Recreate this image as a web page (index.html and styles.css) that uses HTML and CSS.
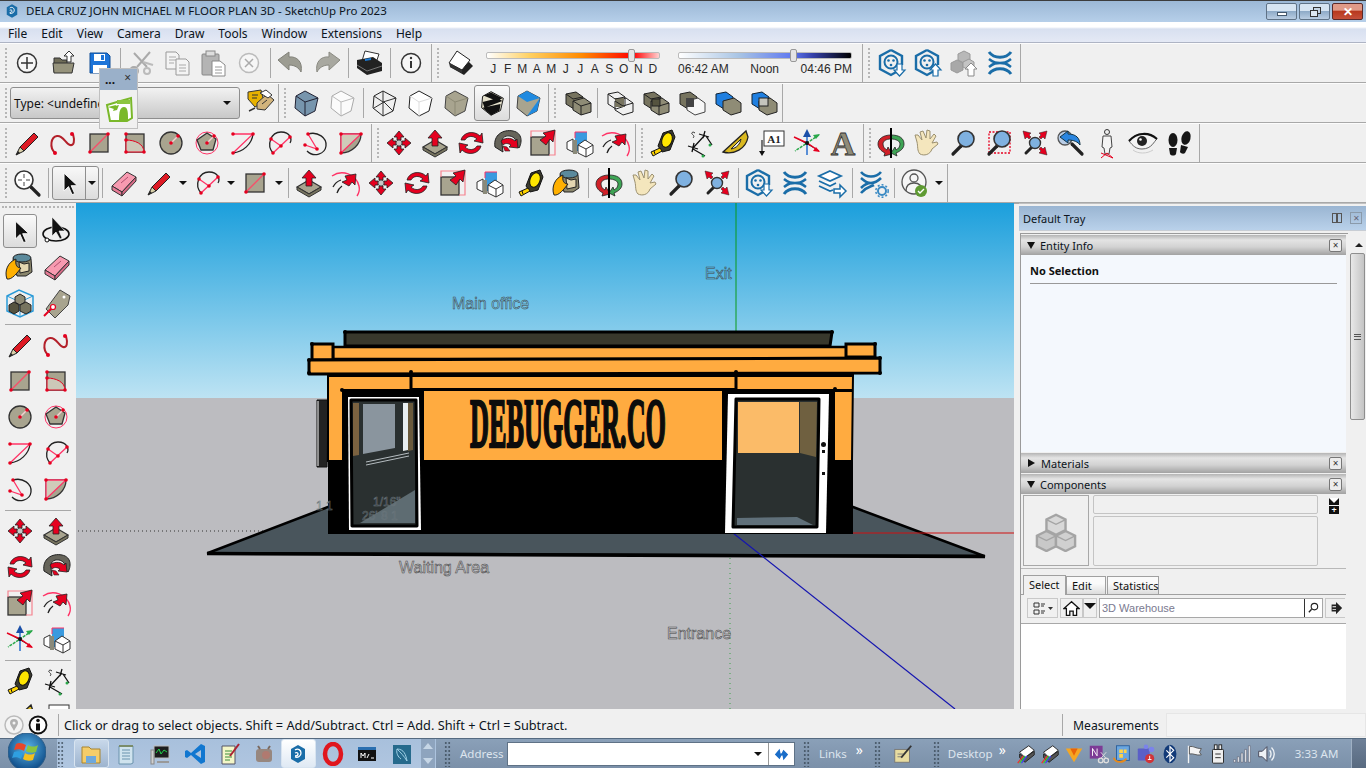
FILE: index.html
```html
<!DOCTYPE html>
<html>
  <head>
    <meta charset="utf-8">
    <title>SketchUp Pro 2023</title>
    <link rel="stylesheet" href="styles.css">
  </head>
  <body>
    <svg class="defs" xmlns="http://www.w3.org/2000/svg">
      <!-- file toolbar -->
      <symbol id="new" viewBox="0 0 36 36"><circle cx="18" cy="18" r="9.5" fill="#f6f6f6" stroke="#333" stroke-width="1.5"/><path d="M18 12v12M12 18h12" stroke="#333" stroke-width="1.5"/></symbol>
      <symbol id="open" viewBox="0 0 36 36"><path d="M9 27V13h6l2 2h5v12z" fill="#6f6c58" stroke="#333"/><path d="M8 18h21l-2 10H9z" fill="#96937c" stroke="#333"/><path d="M24 6l5 5h-3v6h-4v-6h-3z" fill="#fff" stroke="#333"/></symbol>
      <symbol id="save" viewBox="0 0 36 36"><path d="M9 8h17l3 3v17H9z" fill="#1d74d8" stroke="#124f96"/><rect x="13" y="9" width="11" height="7" fill="#fff"/><rect x="20" y="10" width="3" height="5" fill="#1d74d8"/><rect x="12" y="20" width="14" height="8" fill="#fff"/></symbol>
      <symbol id="cut" viewBox="0 0 36 36"><path d="M27 7L14 22M11 8l13 14" stroke="#aaa" stroke-width="2" fill="none"/><path d="M30 20l-10-3" stroke="#bbb" stroke-width="2"/><circle cx="11" cy="26" r="4" fill="none" stroke="#aaa" stroke-width="2"/><circle cx="24" cy="26" r="3" fill="none" stroke="#bbb" stroke-width="2"/></symbol>
      <symbol id="copy" viewBox="0 0 36 36"><path d="M7 7h10l3 3v14H7z" fill="#f4f4f4" stroke="#999"/><path d="M17 14h10l3 3v13H17z" fill="#f4f4f4" stroke="#999"/><path d="M10 12h7M10 15h7M10 18h5M20 20h7M20 23h7M20 26h7" stroke="#aaa"/></symbol>
      <symbol id="paste" viewBox="0 0 36 36"><rect x="7" y="9" width="17" height="21" rx="1" fill="#b4b4b4" stroke="#888"/><rect x="11" y="6" width="9" height="5" fill="#ddd" stroke="#888"/><path d="M17 16h8l5 4v11H17z" fill="#fff" stroke="#888"/><path d="M20 22h7M20 25h7M20 28h7" stroke="#999"/></symbol>
      <symbol id="erase" viewBox="0 0 36 36"><circle cx="18" cy="18" r="9.5" fill="#f6f6f6" stroke="#bbb" stroke-width="1.5"/><path d="M14 14l8 8M22 14l-8 8" stroke="#aaa" stroke-width="1.5"/></symbol>
      <symbol id="undo" viewBox="0 0 36 36"><path d="M5 15l11-8v5c8-1 14 5 12 15-2-4-6-7-12-7v5z" fill="#9c9c92" stroke="#808078"/></symbol>
      <symbol id="redo" viewBox="0 0 36 36"><path d="M31 15l-11-8v5c-8-1-14 5-12 15 2-4 6-7 12-7v5z" fill="#a8a8a0" stroke="#8a8a82"/></symbol>
      <symbol id="print" viewBox="0 0 36 36"><path d="M14 6l14 3-3 9-14-2z" fill="#fff" stroke="#333"/><path d="M6 15l16-3 9 6v8l-15 4-10-7z" fill="#222"/><path d="M6 20l10 6 15-5" stroke="#777" fill="none"/><path d="M14 14l6-1v2l-6 1z" fill="#1c7cd6"/></symbol>
      <symbol id="info" viewBox="0 0 36 36"><circle cx="18" cy="18" r="9.5" fill="#f6f6f6" stroke="#333" stroke-width="1.5"/><path d="M18 16v7" stroke="#333" stroke-width="2"/><circle cx="18" cy="13" r="1.2" fill="#333"/></symbol>
      <!-- shadows, warehouse -->
      <symbol id="shadow" viewBox="0 0 36 36"><path d="M9 22l14 8 9-9-4-4z" fill="#222"/><path d="M16 6l13 9-8 10-13-7z" fill="#fff" stroke="#222"/><path d="M8 18l13 7 0 3-12-6z" fill="#333"/></symbol>
      <symbol id="wh" viewBox="0 0 36 36"><path d="M17 5l11 6v9M24 26l-7 4-11-6V11l11-6" fill="none" stroke="#1a6da8" stroke-width="2.4"/><circle cx="17" cy="17" r="6.5" fill="none" stroke="#1a6da8" stroke-width="2"/><circle cx="14.5" cy="15.5" r="1.3" fill="#1a6da8"/><circle cx="19.5" cy="15.5" r="1.3" fill="#1a6da8"/><circle cx="17" cy="20" r="1.3" fill="#1a6da8"/></symbol>
      <symbol id="whdown" viewBox="0 0 36 36"><use href="#wh"/><path d="M23 19h5v6h3l-5.5 6-5.5-6h3z" fill="#fff" stroke="#1a6da8" stroke-width="1.2"/></symbol>
      <symbol id="whup" viewBox="0 0 36 36"><use href="#wh"/><path d="M23 31h5v-6h3l-5.5-6-5.5 6h3z" fill="#fff" stroke="#1a6da8" stroke-width="1.2"/></symbol>
      <symbol id="cubesup" viewBox="0 0 36 36"><path d="M18 6l6 3v6l-6 3-6-3V9z" fill="#b8b8b8" stroke="#999"/><path d="M11 15l6 3v7l-6 3-6-3v-7z" fill="#a8a8a8" stroke="#999"/><path d="M23 14l5 3v5l-5 3-6-3v-5z" fill="#c4c4c4" stroke="#999"/><path d="M22 31v-7h-3l6-6 6 6h-3v7z" fill="#fff" stroke="#888"/></symbol>
      <symbol id="ext" viewBox="0 0 36 36"><path d="M7 7c5 7 17 7 22 0" fill="none" stroke="#1a6da8" stroke-width="3"/><path d="M7 29c5-7 17-7 22 0" fill="none" stroke="#1a6da8" stroke-width="3"/><path d="M7 14c5 4 7 4 11 4s6 0 11-4M7 22c5-4 7-4 11-4s6 0 11 4" fill="none" stroke="#1a6da8" stroke-width="2.5"/></symbol>
      <symbol id="layers" viewBox="0 0 36 36"><path d="M17 6l11 5-11 5-11-5zM6 16l11 5 6-3M6 21l11 5 3-1" fill="#fff" stroke="#1a6da8" stroke-width="1.8"/><path d="M21 24h6v-4l6 6-6 6v-4h-6z" fill="#fff" stroke="#1a6da8" stroke-width="1.5"/></symbol>
      <symbol id="extgear" viewBox="0 0 36 36"><path d="M6 7c5 6 15 6 20 0M6 28c5-6 9-6 13-8M6 13c5 4 6 5 10 5s6-1 10-5M6 23c4-4 6-5 10-5" fill="none" stroke="#1a6da8" stroke-width="2.6"/><circle cx="27" cy="26" r="4" fill="none" stroke="#3a8ac4" stroke-width="2"/><circle cx="27" cy="26" r="6.2" fill="none" stroke="#3a8ac4" stroke-width="1.5" stroke-dasharray="2 2"/></symbol>
      <symbol id="user" viewBox="0 0 36 36"><circle cx="17" cy="17" r="12" fill="#f6f6f6" stroke="#555" stroke-width="1.3"/><circle cx="17" cy="13" r="4" fill="none" stroke="#555" stroke-width="1.3"/><path d="M9 26c0-7 4-8 8-8s8 1 8 8" fill="none" stroke="#555" stroke-width="1.3"/><circle cx="24" cy="26" r="6" fill="#5e9a32"/><path d="M21 26l2 2 4-4" fill="none" stroke="#fff" stroke-width="1.4"/></symbol>
      <!-- drawing -->
      <symbol id="pencil" viewBox="0 0 36 36"><path d="M11 22L25 8l4 4-14 14z" fill="#dd1a24" stroke="#222"/><path d="M11 22l-4 8 8-4z" fill="#d8cfa8" stroke="#222"/><path d="M7 30l2-4 2 2z" fill="#222"/></symbol>
      <symbol id="freehand" viewBox="0 0 36 36"><path d="M10 28C4 22 6 12 12 11s9 8 13 9 5-4 3-11" fill="none" stroke="#b3202a" stroke-width="2"/><circle cx="10" cy="28" r="2" fill="#e5001f"/><circle cx="27" cy="9" r="2" fill="#e5001f"/></symbol>
      <symbol id="rect" viewBox="0 0 36 36"><rect x="9" y="9" width="18" height="18" fill="#a8a48f" stroke="#333" stroke-width="1.3"/><path d="M9 27L27 9" stroke="#f5506a" stroke-width="1.5"/><circle cx="9" cy="27" r="1.8" fill="#e5001f"/><circle cx="27" cy="9" r="1.8" fill="#e5001f"/></symbol>
      <symbol id="rrect" viewBox="0 0 36 36"><rect x="9" y="9" width="18" height="18" fill="#a8a48f" stroke="#333" stroke-width="1.3"/><path d="M9 15c9 0 18 4 18 12H9z" fill="#ccc8b8" stroke="#e5001f"/><circle cx="9" cy="15" r="1.8" fill="#e5001f"/><circle cx="9" cy="9" r="1.8" fill="#e5001f"/><circle cx="9" cy="27" r="1.8" fill="#e5001f"/><circle cx="27" cy="27" r="1.8" fill="#e5001f"/></symbol>
      <symbol id="circle" viewBox="0 0 36 36"><circle cx="18" cy="18" r="11" fill="#a8a48f" stroke="#333" stroke-width="1.3"/><path d="M18 18l7-7" stroke="#f5d0d0" stroke-width="1.5"/><circle cx="18" cy="18" r="1.8" fill="#e5001f"/><circle cx="25" cy="11" r="1.8" fill="#e5001f"/></symbol>
      <symbol id="polygon" viewBox="0 0 36 36"><circle cx="18" cy="18" r="11" fill="none" stroke="#f36" stroke-width="1"/><path d="M18 8l9 6-3 11H12L8 15z" fill="#a8a48f" stroke="#333" stroke-width="1.3"/><path d="M18 18l7-7" stroke="#f5d0d0" stroke-width="1.5"/><circle cx="18" cy="18" r="1.8" fill="#e5001f"/><circle cx="25" cy="11" r="1.8" fill="#e5001f"/></symbol>
      <symbol id="arc" viewBox="0 0 36 36"><path d="M8 28c10-1 19-9 20-19" fill="none" stroke="#222" stroke-width="1.3"/><path d="M8 9h20L8 28" fill="none" stroke="#f36" stroke-width="1.3"/><circle cx="8" cy="9" r="1.8" fill="#e5001f"/><circle cx="28" cy="9" r="1.8" fill="#e5001f"/><circle cx="8" cy="28" r="1.8" fill="#e5001f"/></symbol>
      <symbol id="arc2" viewBox="0 0 36 36"><path d="M12 28C5 20 10 7 20 7s11 8 9 11" fill="none" stroke="#222" stroke-width="1.3"/><path d="M10 14l10 7M12 28l17-16" stroke="#f36" stroke-width="1.3"/><circle cx="10" cy="14" r="1.8" fill="#e5001f"/><circle cx="29" cy="12" r="1.8" fill="#e5001f"/><circle cx="20" cy="21" r="1.8" fill="#e5001f"/><circle cx="12" cy="28" r="1.8" fill="#e5001f"/></symbol>
      <symbol id="arc3" viewBox="0 0 36 36"><path d="M11 9c10-3 19 4 18 12s-12 12-19 5" fill="none" stroke="#222" stroke-width="1.3"/><path d="M11 9l9 15L8 20" fill="none" stroke="#f36" stroke-width="1.3"/><circle cx="11" cy="9" r="1.8" fill="#e5001f"/><circle cx="20" cy="24" r="1.8" fill="#e5001f"/><circle cx="8" cy="20" r="1.8" fill="#e5001f"/></symbol>
      <symbol id="pie" viewBox="0 0 36 36"><path d="M8 9h20c0 10-9 19-20 19z" fill="#a8a48f" stroke="#333" stroke-width="1.3"/><path d="M8 28L28 9H8z" fill="#cfcbb9" stroke="#f36" stroke-width="1.3"/><circle cx="8" cy="9" r="1.8" fill="#e5001f"/><circle cx="28" cy="9" r="1.8" fill="#e5001f"/><circle cx="8" cy="28" r="1.8" fill="#e5001f"/></symbol>
      <!-- modify -->
      <symbol id="move" viewBox="0 0 36 36"><path d="M18 6l5 6h-3v3h-4v-3h-3zM18 30l5-6h-3v-3h-4v3h-3zM6 18l6-5v3h3v4h-3v3zM30 18l-6-5v3h-3v4h3v3z" fill="#e5001f" stroke="#222" stroke-width=".8"/><circle cx="18" cy="18" r="3" fill="#c8c8c8" stroke="#555"/></symbol>
      <symbol id="pushpull" viewBox="0 0 36 36"><path d="M6 22l12-7 12 7-12 7z" fill="#a8a48f" stroke="#333" stroke-width="1.2"/><path d="M6 22v3l12 7 12-7v-3l-12 7z" fill="#77745f" stroke="#333" stroke-width="1"/><path d="M15 21V13h-4l7-8 7 8h-4v8z" fill="#e5001f" stroke="#222" stroke-width=".8"/></symbol>
      <symbol id="rotate" viewBox="0 0 36 36"><path d="M8 15c2-8 13-10 19-4l2-3 1 10-9-2 3-2c-4-4-10-3-12 1zM28 21c-2 8-13 10-19 4l-2 3-1-10 9 2-3 2c4 4 10 3 12-1z" fill="#e5001f" stroke="#222" stroke-width=".8"/></symbol>
      <symbol id="follow" viewBox="0 0 36 36"><path d="M6 22C4 10 14 4 24 6s9 12 6 17l-4-3c2-4 0-8-5-9-6-1-9 3-8 8l1 8z" fill="#66645a" stroke="#222"/><path d="M12 16c3-3 10-4 14 0l2-2 1 9-9-1 2-2c-3-2-6-2-8 0z" fill="#e5001f" stroke="#222" stroke-width=".8"/><path d="M16 26l-2-5 4 1 3 4z" fill="#e5001f" stroke="#222" stroke-width=".6"/></symbol>
      <symbol id="scale" viewBox="0 0 36 36"><rect x="6" y="12" width="18" height="18" fill="#a8a48f" stroke="#333" stroke-width="1.3"/><path d="M6 12V6h24v24h-6" fill="none" stroke="#f5838f" stroke-width="1.2"/><path d="M15 15l6-4-3-3 12-3-2 12-3-3-4 6z" fill="#e5001f" stroke="#222" stroke-width=".8"/></symbol>
      <symbol id="solid" viewBox="0 0 36 36"><path d="M6 17l6-3 0 13-6-3z" fill="#fff" stroke="#333"/><rect x="14" y="7" width="12" height="19" fill="#3a9adf"/><path d="M14 7h12M14 7v6" stroke="#f36"/><path d="M17 20l7-5 8 5v8l-7 4-8-4z" fill="#fff" stroke="#333"/><path d="M17 20l8 4 7-4M25 24v8" fill="none" stroke="#333"/><rect x="12" y="15" width="4" height="14" fill="#8a8a7a"/></symbol>
      <symbol id="offset" viewBox="0 0 36 36"><path d="M5 11c10-7 24-2 27 10 1 4 0 7-2 10" fill="none" stroke="#f36" stroke-width="1.4"/><path d="M6 22c2-4 5-6 8-7M10 28c1-3 2-5 5-7" fill="none" stroke="#222" stroke-width="1.3"/><path d="M15 17l5-2-2-4 11-2-1 11-3-3-3 4z" fill="#e5001f" stroke="#222" stroke-width=".8"/></symbol>
      <!-- construction -->
      <symbol id="tape" viewBox="0 0 36 36"><path d="M13 21l5-13 9-3 3 7-5 13-8 2z" fill="#3a3a30" stroke="#111"/><ellipse cx="22" cy="15" rx="5" ry="7.5" transform="rotate(20 22 15)" fill="#ffe600" stroke="#111"/><path d="M15 23l-9 4 2 4 9-5z" fill="#ffd400" stroke="#111"/><path d="M9 26l1 3" stroke="#111"/></symbol>
      <symbol id="dim" viewBox="0 0 36 36"><path d="M24 6l-2 7M18 9l10 3M13 18l-2 9M7 21l10 3M24 10L12 23M12 24l12 7M25 11l6 9" stroke="#111" stroke-width="1.3" fill="none"/><path d="M14 8c-2-2-4 0-3 1s3 2 1 4" fill="none" stroke="#333"/><circle cx="29" cy="20" r="1.5" fill="#2aa84a"/><circle cx="22" cy="31" r="1.5" fill="#2aa84a"/></symbol>
      <symbol id="protractor" viewBox="0 0 36 36"><path d="M6 27L29 6l2 6c-2 12-14 18-25 15z" fill="#d9b820" stroke="#222" stroke-width="1.3"/><path d="M14 24c6-1 9-5 10-10l-10 10z" fill="#f0f0f0" stroke="#222"/></symbol>
      <symbol id="textbox" viewBox="0 0 36 36"><rect x="11" y="6" width="20" height="15" fill="#fff" stroke="#333"/><path d="M9 15v14" stroke="#333" stroke-width="1.3"/><path d="M6 26h6l-3 5z" fill="#111"/></symbol>
      <symbol id="axes" viewBox="0 0 36 36"><path d="M18 30V10" stroke="#5a8fd6" stroke-width="2"/><path d="M18 4l4 8h-8z" fill="#1a4fa8"/><path d="M5 12l13 6 12 8" stroke="#e5001f" stroke-width="1.5"/><path d="M30 10L18 18 6 26" stroke="#2aa84a" stroke-width="1.5" stroke-dasharray="3 1"/><path d="M31 27l-7-1 3-4z" fill="#e5001f"/><path d="M31 9l-7 1 3 4z" fill="#2aa84a"/><circle cx="18" cy="18" r="2" fill="#111"/></symbol>
      <!-- camera -->
      <symbol id="orbit" viewBox="0 0 36 36"><path d="M18 10C10 10 5 14 5 19c0 4 3 7 7 9l-1 3 8-2-4-7-1 3c-2-1-4-3-4-6 0-3 3-5 8-5z" fill="#d02028" stroke="#222" stroke-width=".8"/><path d="M18 10c8 0 13 3 13 9 0 4-3 7-8 9l1 3-6-3 4-6 1 3c2-1 4-3 4-6s-4-5-9-5z" fill="#3ea455" stroke="#222" stroke-width=".8"/><path d="M18 3v30" stroke="#000" stroke-width="2"/></symbol>
      <symbol id="pan" viewBox="0 0 36 36"><path d="M8 17l-2-7 3 0 4 5-2-8 3-1 3 7 1-8 3 1 0 8 4-5 2 2-4 7 5-1 1 2-6 5c-2 6-8 7-12 5-3-3-2-8-3-12z" fill="#f4e6bd" stroke="#9b9070"/></symbol>
      <symbol id="mag" viewBox="0 0 36 36"><path d="M8 29l8-8" stroke="#222" stroke-width="3.2" stroke-linecap="round"/><circle cx="21" cy="14" r="8" fill="#7fb1e0" stroke="#333" stroke-width="1.6"/></symbol>
      <symbol id="zoomwin" viewBox="0 0 36 36"><rect x="8" y="7" width="21" height="21" fill="none" stroke="#e5001f" stroke-width="1.3" stroke-dasharray="2 1.5"/><use href="#mag"/></symbol>
      <symbol id="extents" viewBox="0 0 36 36"><path d="M9 28l7-7" stroke="#222" stroke-width="3" stroke-linecap="round"/><circle cx="18" cy="18" r="5.5" fill="#7fb1e0" stroke="#333" stroke-width="1.4"/><path d="M6 6l8 2-2 2 2 2-2 2-2-2-2 2zM30 6l-2 8-2-2-2 2-2-2 2-2-2-2zM30 30l-8-2 2-2-2-2 2-2 2 2 2-2z" fill="#e5001f" stroke="#222" stroke-width=".5"/></symbol>
      <symbol id="prev" viewBox="0 0 36 36"><circle cx="12" cy="13" r="7" fill="#b9cde6" stroke="#555" stroke-width="1.3"/><path d="M29 29L19 19" stroke="#222" stroke-width="3.2" stroke-linecap="round"/><path d="M7 12l8-6v3c8 0 12 4 12 11-2-3-6-5-12-5v3z" fill="#2a85df" stroke="#134"/></symbol>
      <symbol id="poscam" viewBox="0 0 36 36"><circle cx="18" cy="7" r="2.5" fill="#eee" stroke="#333"/><path d="M14 11h8l1 11-2 1-1 6h-4l-1-6-2-1z" fill="#f4f4f4" stroke="#444"/><path d="M12 33l6-5 6 5M12 28l12 5" stroke="#e5001f" fill="none"/></symbol>
      <symbol id="look" viewBox="0 0 36 36"><path d="M4 16c7-9 20-10 28-2-3 2-5 10-15 10-6 0-9-3-13-8z" fill="#f4f4f4" stroke="#666"/><path d="M4 16C12 7 24 7 32 14" fill="none" stroke="#111" stroke-width="2.2"/><circle cx="17" cy="16" r="5" fill="#222"/><circle cx="15.5" cy="14.5" r="1.3" fill="#fff"/><path d="M8 25c5 4 14 4 20 0" stroke="#ccc" fill="none"/></symbol>
      <symbol id="walk" viewBox="0 0 36 36"><ellipse cx="12" cy="15" rx="4.5" ry="7" fill="#161616"/><path d="M8 23h8l-1 6c-1 2-5 2-6 0z" fill="#161616"/><ellipse cx="25" cy="13" rx="4.5" ry="7" transform="rotate(15 25 13)" fill="#161616"/><path d="M20 20l7 2-3 6c-1 1-4 1-5-1z" fill="#161616"/></symbol>
      <!-- principal -->
      <symbol id="zoomfind" viewBox="0 0 36 36"><path d="M22 22l8 8" stroke="#222" stroke-width="3.2" stroke-linecap="round"/><circle cx="15" cy="15" r="9" fill="#fff" stroke="#333" stroke-width="1.6"/><path d="M15 9v4M15 17v4M9 15h4M17 15h4" stroke="#444"/></symbol>
      <symbol id="select" viewBox="0 0 36 36"><path d="M13 7v20l5-5 4 9 3-1-4-9h7z" fill="#111" stroke="#fff"/></symbol>
      <symbol id="orbitsel" viewBox="0 0 36 36"><ellipse cx="18" cy="21" rx="13" ry="7" fill="none" stroke="#111" stroke-width="1.6"/><circle cx="9" cy="27" r="2" fill="#fff" stroke="#111"/><path d="M14 4v19l4-4 4 7 2-1-3-7h6z" fill="#111" stroke="#fff" stroke-width=".6"/></symbol>
      <symbol id="eraser" viewBox="0 0 36 36"><path d="M7 21L22 7l9 5-14 15z" fill="#f79ab0" stroke="#333"/><path d="M7 21l10 6v4L7 25z" fill="#e67b96" stroke="#333"/><path d="M17 27l14-15v4L17 31z" fill="#d66a86" stroke="#333"/><path d="M16 18l7-6" stroke="#b05070"/></symbol>
      <symbol id="paint" viewBox="0 0 36 36"><path d="M11 10C14 4 26 4 29 10l1 13-6 4H15z" fill="#8a866c" stroke="#222"/><ellipse cx="20" cy="9" rx="9" ry="4" fill="#5b8a9c" stroke="#222"/><path d="M17 13l5 2 5-1v8l-9 2z" fill="#e3d6b0" stroke="#222"/><path d="M14 10C6 13 2 22 5 30c5 1 10-6 14-11-4 0-6-3-5-9z" fill="#ffb000" stroke="#222"/></symbol>
      <symbol id="tag" viewBox="0 0 36 36"><path d="M22 5l10 6-2 9-13 13-9-9z" fill="#a8a48f" stroke="#444"/><circle cx="26" cy="12" r="1.5" fill="#fff"/><path d="M6 31l9-9" stroke="#e5001f" stroke-width="2"/><circle cx="15" cy="22" r="2.5" fill="#fff" stroke="#e5001f" stroke-width="1.2"/></symbol>
      <symbol id="tags" viewBox="0 0 36 36"><path d="M8 7l13-2 3 12-9 5-7-8z" fill="#e8b200" stroke="#333"/><path d="M17 18l10-9 7 6-9 10-8-1z" fill="#d2b47c" stroke="#333"/><path d="M20 8l6-3 6 5-4 3z" fill="#fff" stroke="#333"/><path d="M12 10h6M12 13h5M22 19l5-4" stroke="#333"/><path d="M9 26l6-3" stroke="#333" stroke-width="1.5"/></symbol>
      <symbol id="cubesel" viewBox="0 0 36 36"><path d="M5 11l12-6 14 6v15l-13 6-13-6z" fill="none" stroke="#2a9ad8" stroke-width="1.5"/><path d="M5 11l13 6 13-6M18 17v15" fill="none" stroke="#2a9ad8"/><path d="M18 9l5 3v5l-5 3-5-3v-5z" fill="#8f8c76" stroke="#222"/><path d="M12 17l5 3v6l-5 3-5-3v-6z" fill="#55533f" stroke="#222"/><path d="M24 17l5 3v6l-5 3-6-3v-6z" fill="#77745f" stroke="#222"/></symbol>
      <!-- style cubes -->
      <symbol id="sxray" viewBox="0 0 36 36"><path d="M17 6l13 7-3 13-10 5-10-8 1-12z" fill="#7795ad" stroke="#223"/><path d="M8 11l9 6 13-4M17 17l0 14" stroke="#223" fill="none"/></symbol>
      <symbol id="sback" viewBox="0 0 36 36"><path d="M17 6l13 7-3 13-10 5-10-8 1-12z" fill="#fbfbfb" stroke="#aaa"/><path d="M8 11l9 6 13-4M17 17l0 14" stroke="#bbb" fill="none"/></symbol>
      <symbol id="swire" viewBox="0 0 36 36"><path d="M17 6l13 7-3 13-10 5-10-8 1-12z" fill="none" stroke="#222"/><path d="M8 11l9 6 13-4M17 17l0 14M8 23l10-6 9 9M17 6v11" stroke="#333" fill="none"/></symbol>
      <symbol id="shide" viewBox="0 0 36 36"><path d="M17 6l13 7-3 13-10 5-10-8 1-12z" fill="#fff" stroke="#222"/><path d="M8 11l9 6 13-4M17 17l0 14" stroke="#ddd" fill="none"/></symbol>
      <symbol id="sshade" viewBox="0 0 36 36"><path d="M17 6l13 7-3 13-10 5-10-8 1-12z" fill="#a8a48f" stroke="#444"/><path d="M8 11l9 6 13-4M17 17l0 14" stroke="#8c8974" fill="none"/></symbol>
      <symbol id="stripes" viewBox="0 0 36 36"><path d="M17 6l13 7-3 13-10 5-10-8 1-12z" fill="#e3dfca" stroke="#111"/><path d="M9 10l8-3 12 6-6 3zM8 17l16-4 5 3-19 7zM8 23l19-4-1 7-9 5z" fill="#111"/></symbol>
      <symbol id="smono" viewBox="0 0 36 36"><path d="M17 6l13 7-3 13-10 5-10-8 1-12z" fill="#a8a48f" stroke="#444"/><path d="M8 11l9-5 13 7-13 4z" fill="#1f8ae0"/><path d="M30 13l-3 13-10 5z" fill="#1f8ae0"/></symbol>
      <symbol id="pair" viewBox="0 0 36 36"><path d="M8 9l10-2 7 5v9l-9 3-8-5z" fill="#77745f" stroke="#222"/><path d="M15 16l11-3 7 5v9l-10 3-8-5z" fill="#8f8c76" stroke="#222"/><path d="M15 16l8 5 10-3M23 21v9M8 9l7 5 10-2" stroke="#222" fill="none"/></symbol>
      <symbol id="pairwire" viewBox="0 0 36 36"><path d="M8 9l10-2 7 5v9l-9 3-8-5z" fill="none" stroke="#222"/><path d="M15 16l11-3 7 5v9l-10 3-8-5z" fill="none" stroke="#222"/><rect x="15" y="13" width="9" height="9" fill="#77745f"/><path d="M8 9l7 5 10-2M15 16l8 5 10-3" stroke="#222" fill="none"/></symbol>
      <symbol id="pairin" viewBox="0 0 36 36"><use href="#pair"/><rect x="16" y="14" width="8" height="7" fill="#55533f" stroke="#222"/></symbol>
      <symbol id="pairmix" viewBox="0 0 36 36"><path d="M8 9l10-2 7 5v9l-9 3-8-5z" fill="#77745f" stroke="#222"/><path d="M15 16l11-3 7 5v9l-10 3-8-5z" fill="#f6f6f6" stroke="#444"/><rect x="14" y="13" width="8" height="9" fill="#444"/></symbol>
      <symbol id="pairblue" viewBox="0 0 36 36"><path d="M8 9l10-2 7 5v9l-9 3-8-5z" fill="#1f7fe0" stroke="#123"/><path d="M15 16l11-3 7 5v9l-10 3-8-5z" fill="#8f8c76" stroke="#222"/></symbol>
      <symbol id="pairbluein" viewBox="0 0 36 36"><use href="#pairblue"/><rect x="15" y="13" width="9" height="8" fill="#c4c4bc" stroke="#222"/></symbol>
      <!-- taskbar -->
      <symbol id="t-folder" viewBox="0 0 24 24"><path d="M3 5h7l2 2h9v14H3z" fill="#f4cd6a" stroke="#a8842e"/><path d="M7 14h10v7H7z" fill="#6ea8dc"/></symbol>
      <symbol id="t-notes" viewBox="0 0 24 24"><path d="M5 4h14v17l-2 1H5z" fill="#cfe3ee" stroke="#6b93ad"/><path d="M8 8h8M8 11h8M8 14h8M8 17h8" stroke="#6b93ad"/><path d="M5 3h14v2H5z" fill="#7a8c6a"/></symbol>
      <symbol id="t-mon" viewBox="0 0 24 24"><rect x="6" y="4" width="15" height="12" fill="#1d1d1d" stroke="#bbb"/><path d="M8 11l3-4 2 5 3-4 3 2" stroke="#21d04a" fill="none"/><rect x="3" y="8" width="3" height="14" fill="#d0d0d0" stroke="#888"/><path d="M9 20h12" stroke="#999" stroke-width="2"/></symbol>
      <symbol id="t-code" viewBox="0 0 24 24"><path d="M18 2l4 2v16l-4 2-10-9-4 3-2-1V9l2-1 4 3zM18 8l-6 4 6 4z" fill="#1177d0"/></symbol>
      <symbol id="t-npp" viewBox="0 0 24 24"><path d="M5 4h13v18H5z" fill="#f4f6c8" stroke="#556"/><path d="M8 9h7M8 12h7M8 15h7M8 18h5" stroke="#3a8c3a"/><path d="M13 14L22 2" stroke="#a23" stroke-width="2"/></symbol>
      <symbol id="t-gray" viewBox="0 0 24 24"><rect x="4" y="7" width="16" height="13" rx="3" fill="#97877f"/><circle cx="14" cy="13" r="4" fill="#b07a70"/><path d="M8 7l-2-3M16 7l2-3" stroke="#7a6a60" stroke-width="2"/></symbol>
      <symbol id="t-su" viewBox="0 0 24 24"><path d="M12 3l7 4v10l-7 4-7-4V7z" fill="#1a6da8"/><path d="M9 8c3-2 6 0 6 3s-3 5-6 4M9 11c2-1 3 0 3 1s-1 2-3 2" fill="none" stroke="#fff" stroke-width="1.3"/></symbol>
      <symbol id="t-opera" viewBox="0 0 24 24"><ellipse cx="12" cy="12" rx="8" ry="10" fill="none" stroke="#e0161e" stroke-width="4.5"/></symbol>
      <symbol id="t-term" viewBox="0 0 24 24"><rect x="3" y="5" width="18" height="14" fill="#111"/><rect x="3" y="5" width="18" height="3" fill="#2a6fb0"/><path d="M6 16v-5l2 3 2-3v5M12 16l2-4M16 16h3" stroke="#fff" fill="none"/></symbol>
      <symbol id="t-sql" viewBox="0 0 24 24"><rect x="3" y="3" width="18" height="19" fill="#266a8c"/><path d="M7 7c7 0 9 6 10 12-3-5-6-8-10-12zM7 7c-1 4 1 8 4 10" fill="none" stroke="#9fd0e6"/></symbol>
      <symbol id="t-printc" viewBox="0 0 24 24"><path d="M5 10l10-7 6 5-10 8z" fill="#fff" stroke="#222"/><path d="M5 12l6 4 10-7v4l-10 8-6-5z" fill="#555" stroke="#222"/><path d="M3 22l6-8" stroke="#e33" stroke-width="1.5"/><path d="M5 22l6-8" stroke="#3c3" stroke-width="1.5"/><path d="M7 22l6-8" stroke="#44e" stroke-width="1.5"/></symbol>
      <symbol id="t-vee" viewBox="0 0 24 24"><path d="M3 6h18l-9 15z" fill="#f5a623"/><path d="M8 6l4 8 4-8z" fill="#e8630a"/></symbol>
      <symbol id="t-onenote" viewBox="0 0 24 24"><rect x="3" y="3" width="14" height="14" fill="#7d3b96"/><path d="M6 14V6l5 8V6" stroke="#fff" fill="none"/><circle cx="15" cy="19" r="2.5" fill="none" stroke="#ddd" stroke-width="1.5"/><circle cx="21" cy="19" r="2.5" fill="none" stroke="#ddd" stroke-width="1.5"/><path d="M15 17l6-7M21 17l-6-7" stroke="#ddd"/></symbol>
      <symbol id="t-win" viewBox="0 0 24 24"><rect x="6" y="3" width="14" height="16" fill="#6aa6e0" stroke="#2a5f9c"/><path d="M9 7h4v4H9zM14 7h3v4h-3zM9 12h4v4H9z" fill="#ffd24a"/><path d="M3 16c2 6 10 6 14 1" stroke="#e88a1a" stroke-width="2" fill="none"/></symbol>
      <symbol id="t-teams" viewBox="0 0 24 24"><rect x="3" y="6" width="13" height="13" rx="1" fill="#5b5fc7"/><circle cx="18" cy="7" r="3" fill="#7b83eb"/><circle cx="12" cy="4" r="2.5" fill="#7b83eb"/><circle cx="16" cy="17" r="5" fill="#d13438"/><path d="M16 14v4M14 18h4" stroke="#fff"/></symbol>
      <symbol id="t-bt" viewBox="0 0 24 24"><ellipse cx="12" cy="12" rx="7" ry="10" fill="#123a78"/><path d="M8 8l8 8-4 4V4l4 4-8 8" fill="none" stroke="#fff" stroke-width="1.3"/></symbol>
      <symbol id="t-flag" viewBox="0 0 24 24"><path d="M6 3v19" stroke="#f4f4f4" stroke-width="1.5"/><path d="M7 4c5-1 6 2 13 2l-2 4 2 3c-6 1-8-2-13-1z" fill="#f4f4f4" stroke="#555"/></symbol>
      <symbol id="t-power" viewBox="0 0 24 24"><rect x="6" y="7" width="12" height="15" rx="1" fill="#eee" stroke="#222"/><rect x="8" y="2" width="3" height="5" fill="#eee" stroke="#222"/><rect x="13" y="2" width="3" height="5" fill="#eee" stroke="#222"/><path d="M9 12h6M9 16h6" stroke="#222"/></symbol>
      <symbol id="t-signal" viewBox="0 0 24 24"><path d="M3 18h2v3H3zM7 15h2v6H7zM11 11h2v10h-2zM15 7h2v14h-2zM19 3h2v18h-2z" fill="#eef2f6" stroke="#445" stroke-width=".5"/></symbol>
      <symbol id="t-sound" viewBox="0 0 24 24"><path d="M4 9h4l5-5v16l-5-5H4z" fill="#eef2f6" stroke="#445"/><path d="M16 8c2 2 2 6 0 8M18 5c4 4 4 10 0 14" fill="none" stroke="#eef2f6" stroke-width="1.5"/></symbol>
      <symbol id="t-note" viewBox="0 0 24 24"><rect x="3" y="7" width="16" height="14" fill="#e8dca0" stroke="#777"/><path d="M10 16L21 3" stroke="#333" stroke-width="2"/><path d="M6 12h6M6 15h4" stroke="#777"/></symbol>
    </svg>

    <div class="app">
      <header class="titlebar">
        <svg class="title-logo"><use href="#t-su"/></svg>
        <span class="title-text">DELA CRUZ JOHN MICHAEL M FLOOR PLAN 3D - SketchUp Pro 2023</span>
        <div class="win-btns">
          <span class="win-btn"><i class="win-min"></i></span>
          <span class="win-btn"><i class="win-max back"></i><i class="win-max"></i></span>
          <span class="win-btn win-close">✕</span>
        </div>
      </header>

      <nav class="menubar">
        <span>File</span><span>Edit</span><span>View</span><span>Camera</span><span>Draw</span><span>Tools</span><span>Window</span><span>Extensions</span><span>Help</span>
      </nav>

      <div class="tbrow">
        <div class="panel">
          <i class="grip"></i>
          <svg class="ic"><use href="#new"/></svg><svg class="ic"><use href="#open"/></svg><svg class="ic"><use href="#save"/></svg>
          <i class="sep"></i>
          <svg class="ic"><use href="#cut"/></svg><svg class="ic"><use href="#copy"/></svg><svg class="ic"><use href="#paste"/></svg><svg class="ic"><use href="#erase"/></svg>
          <i class="sep"></i>
          <svg class="ic"><use href="#undo"/></svg><svg class="ic"><use href="#redo"/></svg>
          <i class="sep"></i>
          <svg class="ic"><use href="#print"/></svg>
          <i class="sep"></i>
          <svg class="ic"><use href="#info"/></svg>
        </div>
        <div class="panel">
          <i class="grip"></i>
          <svg class="ic"><use href="#shadow"/></svg>
          <div class="slider month">
            <div class="track"><i class="knob"></i></div>
            <div class="months"><span>J</span><span>F</span><span>M</span><span>A</span><span>M</span><span>J</span><span>J</span><span>A</span><span>S</span><span>O</span><span>N</span><span>D</span></div>
          </div>
          <div class="slider time">
            <div class="track"><i class="knob"></i></div>
            <div class="times"><span>06:42 AM</span><span>Noon</span><span>04:46 PM</span></div>
          </div>
        </div>
        <div class="panel">
          <i class="grip"></i>
          <svg class="ic first"><use href="#whdown"/></svg><svg class="ic"><use href="#whup"/></svg><svg class="ic"><use href="#cubesup"/></svg><svg class="ic"><use href="#ext"/></svg>
        </div>
      </div>

      <div class="tbrow">
        <div class="panel">
          <i class="grip"></i>
          <div class="combo"><span>Type: &lt;undefined&gt;</span><i class="caret"></i></div>
          <svg class="ic"><use href="#tags"/></svg>
        </div>
        <div class="panel">
          <i class="grip"></i>
          <svg class="ic"><use href="#sxray"/></svg><svg class="ic"><use href="#sback"/></svg>
          <i class="sep"></i>
          <svg class="ic"><use href="#swire"/></svg><svg class="ic"><use href="#shide"/></svg><svg class="ic"><use href="#sshade"/></svg><svg class="ic on"><use href="#stripes"/></svg><svg class="ic"><use href="#smono"/></svg>
        </div>
        <div class="panel">
          <i class="grip"></i>
          <svg class="ic"><use href="#pair"/></svg>
          <i class="sep"></i>
          <svg class="ic"><use href="#pairwire"/></svg><svg class="ic"><use href="#pairin"/></svg><svg class="ic"><use href="#pairmix"/></svg><svg class="ic"><use href="#pairblue"/></svg><svg class="ic"><use href="#pairbluein"/></svg>
        </div>
      </div>

      <div class="tbrow">
        <div class="panel">
          <i class="grip"></i>
          <svg class="ic"><use href="#pencil"/></svg><svg class="ic"><use href="#freehand"/></svg><svg class="ic"><use href="#rect"/></svg><svg class="ic"><use href="#rrect"/></svg><svg class="ic"><use href="#circle"/></svg><svg class="ic"><use href="#polygon"/></svg><svg class="ic"><use href="#arc"/></svg><svg class="ic"><use href="#arc2"/></svg><svg class="ic"><use href="#arc3"/></svg><svg class="ic"><use href="#pie"/></svg>
        </div>
        <div class="panel">
          <i class="grip"></i>
          <svg class="ic"><use href="#move"/></svg><svg class="ic"><use href="#pushpull"/></svg><svg class="ic"><use href="#rotate"/></svg><svg class="ic"><use href="#follow"/></svg><svg class="ic"><use href="#scale"/></svg><svg class="ic"><use href="#solid"/></svg><svg class="ic"><use href="#offset"/></svg>
        </div>
        <div class="panel">
          <i class="grip"></i>
          <svg class="ic"><use href="#tape"/></svg><svg class="ic"><use href="#dim"/></svg><svg class="ic"><use href="#protractor"/></svg>
          <svg class="ic"><use href="#textbox"/><text class="ic-a1" x="21" y="18">A1</text></svg>
          <svg class="ic"><use href="#axes"/></svg>
          <svg class="ic"><text class="ic-3d" x="18" y="30">A</text></svg>
        </div>
        <div class="panel">
          <i class="grip"></i>
          <svg class="ic"><use href="#orbit"/></svg><svg class="ic"><use href="#pan"/></svg><svg class="ic"><use href="#mag"/></svg><svg class="ic"><use href="#zoomwin"/></svg><svg class="ic"><use href="#extents"/></svg><svg class="ic"><use href="#prev"/></svg><svg class="ic"><use href="#poscam"/></svg><svg class="ic"><use href="#look"/></svg><svg class="ic"><use href="#walk"/></svg>
        </div>
      </div>

      <div class="tbrow">
        <div class="panel">
          <i class="grip"></i>
          <svg class="ic"><use href="#zoomfind"/></svg>
          <i class="sep"></i>
          <div class="selbtn"><svg class="ic"><use href="#select"/></svg><i class="drop"></i></div>
          <i class="sep"></i>
          <svg class="ic"><use href="#eraser"/></svg>
          <svg class="ic"><use href="#pencil"/></svg><i class="drop"></i>
          <svg class="ic"><use href="#arc2"/></svg><i class="drop"></i>
          <svg class="ic"><use href="#rect"/></svg><i class="drop"></i>
          <i class="sep"></i>
          <svg class="ic"><use href="#pushpull"/></svg><svg class="ic"><use href="#offset"/></svg><svg class="ic"><use href="#move"/></svg><svg class="ic"><use href="#rotate"/></svg><svg class="ic"><use href="#scale"/></svg><svg class="ic"><use href="#solid"/></svg>
          <i class="sep"></i>
          <svg class="ic"><use href="#tape"/></svg><svg class="ic"><use href="#paint"/></svg>
          <i class="sep"></i>
          <svg class="ic"><use href="#orbit"/></svg><svg class="ic"><use href="#pan"/></svg><svg class="ic"><use href="#mag"/></svg><svg class="ic"><use href="#extents"/></svg>
          <i class="sep"></i>
          <svg class="ic"><use href="#whdown"/></svg><svg class="ic"><use href="#ext"/></svg><svg class="ic"><use href="#layers"/></svg>
          <i class="sep"></i>
          <svg class="ic"><use href="#extgear"/></svg>
          <i class="sep"></i>
          <svg class="ic"><use href="#user"/></svg><i class="drop"></i>
        </div>
      </div>

      <main class="workspace">
        <aside class="lefttools">
          <i class="hgrip"></i>
          <svg class="ic on"><use href="#select"/></svg><svg class="ic"><use href="#orbitsel"/></svg>
          <svg class="ic"><use href="#paint"/></svg><svg class="ic"><use href="#eraser"/></svg>
          <svg class="ic"><use href="#cubesel"/></svg><svg class="ic"><use href="#tag"/></svg>
          <i class="hsep"></i>
          <svg class="ic"><use href="#pencil"/></svg><svg class="ic"><use href="#freehand"/></svg>
          <svg class="ic"><use href="#rect"/></svg><svg class="ic"><use href="#rrect"/></svg>
          <svg class="ic"><use href="#circle"/></svg><svg class="ic"><use href="#polygon"/></svg>
          <svg class="ic"><use href="#arc"/></svg><svg class="ic"><use href="#arc2"/></svg>
          <svg class="ic"><use href="#arc3"/></svg><svg class="ic"><use href="#pie"/></svg>
          <i class="hsep"></i>
          <svg class="ic"><use href="#move"/></svg><svg class="ic"><use href="#pushpull"/></svg>
          <svg class="ic"><use href="#rotate"/></svg><svg class="ic"><use href="#follow"/></svg>
          <svg class="ic"><use href="#scale"/></svg><svg class="ic"><use href="#offset"/></svg>
          <svg class="ic"><use href="#axes"/></svg><svg class="ic"><use href="#solid"/></svg>
          <i class="hsep"></i>
          <svg class="ic"><use href="#tape"/></svg><svg class="ic"><use href="#dim"/></svg>
          <svg class="ic"><use href="#protractor"/></svg><svg class="ic"><use href="#textbox"/></svg>
        </aside>

        <section class="viewport">
          <svg class="scene" viewBox="76 203 938 506" xmlns="http://www.w3.org/2000/svg">
            <!-- axes behind model -->
            <path d="M736 203V345" stroke="#0a9a1a" stroke-width="1"/>
            <path d="M78 531H330" stroke="#333" stroke-dasharray="1 3"/>
            <!-- side window -->
            <path d="M317 400h11l-1 67h-10z" fill="#222" stroke="#111"/>
            <path d="M318 401v65" stroke="#fff"/>
            <!-- slab -->
            <path d="M208 553L328 507H853L984 556z" fill="#49555c" stroke="#000" stroke-width="2.5" stroke-linejoin="round"/>
            <path d="M207 553.5L985 556.5" stroke="#000" stroke-width="3.5"/>
            <path d="M853 533H1014" stroke="#d01010"/>
            <path d="M733 533L955 709" stroke="#1515b0" stroke-width="1.2"/>
            <path d="M730 558V709" stroke="#3aa04a" stroke-dasharray="1 4"/>
            <!-- roof -->
            <path d="M345 332H832L830 346H345z" fill="#38382c" stroke="#000" stroke-width="3" stroke-linejoin="round"/>
            <path d="M333 347H847V359H333z" fill="#ffab40" stroke="#000" stroke-width="2.5"/>
            <path d="M312 344H333V360H312z" fill="#ffab40" stroke="#000" stroke-width="3"/>
            <path d="M846 344H875V357H846z" fill="#ffab40" stroke="#000" stroke-width="3"/>
            <path d="M309 360L880 358V373L309 374z" fill="#ffab40" stroke="#000" stroke-width="3" stroke-linejoin="round"/>
            <!-- wall -->
            <path d="M328 375H853L852 461H328z" fill="#ffab40" stroke="#000" stroke-width="2"/>
            <path d="M329 376H852" stroke="#000" stroke-width="2"/>
            <path d="M342 390.5H411V376M736 376V390M412 389.5H736L736 390.5H852" fill="none" stroke="#000" stroke-width="3"/>
            <path d="M328 461H853V534H328z" fill="#000"/>
            <path d="M342 391H424V461H342zM722 391H835V461H722z" fill="#000"/>
            <!-- left door -->
            <path d="M348 397H419L421 530L349 530z" fill="#fff"/>
            <path d="M351 400H416L417 526H352z" fill="#2a3030" stroke="#000" stroke-width="3" stroke-linejoin="round"/>
            <path d="M353 403h6v52l-6 1z" fill="#7b6240"/>
            <path d="M363 404H395V448L363 454z" fill="#8a959e"/>
            <path d="M403 403h5v47l-5 1z" fill="#e8eef0"/>
            <path d="M408 403h5v47l-5 1z" fill="#6a5a3c"/>
            <path d="M366 462l43-9M366 465l43-9" stroke="#b5bcc0"/>
            <path d="M360 523L415 490V523z" fill="#5e6c72"/>
            <text class="dim-text" x="373" y="506">1/16"</text>
            <text class="dim-text" x="362" y="520">26' 8 1</text>
            <text class="dim-text" x="316" y="510">1 1</text>
            <!-- right door -->
            <path d="M728 394H829L826 533H725z" fill="#fff"/>
            <path d="M736 399H819L817 527H733z" fill="#2a3030" stroke="#000" stroke-width="3" stroke-linejoin="round"/>
            <path d="M738 402H799V453H738z" fill="#fbbb68"/>
            <path d="M800 402H817L816 457L800 453z" fill="#6f6040"/>
            <path d="M737 518L797 517L813 525H737z" fill="#60707a"/>
            <circle cx="823.5" cy="444.5" r="2.5" fill="#111"/>
            <rect x="822" y="450" width="3" height="3" fill="#111"/>
            <rect x="822" y="472" width="3" height="3" fill="#111"/>
            <!-- sign -->
            <text class="sign" x="470" y="447" textLength="196" lengthAdjust="spacingAndGlyphs">DEBUGGER.CO</text>
            <!-- corners -->
            <g fill="#000">
              <circle cx="345" cy="332" r="2"/><circle cx="832" cy="332" r="2"/><circle cx="312" cy="344" r="2"/><circle cx="875" cy="344" r="2"/>
              <circle cx="309" cy="360" r="2"/><circle cx="309" cy="373" r="2"/><circle cx="880" cy="358" r="2"/><circle cx="880" cy="373" r="2"/>
              <circle cx="411" cy="372" r="2"/><circle cx="736" cy="372" r="2"/><circle cx="342" cy="390" r="2"/><circle cx="835" cy="389" r="2"/>
            </g>
            <!-- labels -->
            <text class="label" x="705" y="279">Exit</text>
            <text class="label" x="452" y="309">Main office</text>
            <text class="label" x="399" y="573">Waiting Area</text>
            <text class="label" x="667" y="639">Entrance</text>
          </svg>
        </section>

        <div class="splitter"></div>

        <aside class="tray">
          <div class="tray-head">
            <span>Default Tray</span>
            <i class="tray-pin"></i><i class="tray-x">✕</i>
          </div>
          <div class="tray-body">
            <div class="tray-panels">
              <div class="sec-head"><i class="tri-down"></i><span>Entity Info</span><i class="sec-x">×</i></div>
              <div class="entity">
                <b>No Selection</b>
              </div>
              <div class="sec-head gap"><i class="tri-right"></i><span>Materials</span><i class="sec-x">×</i></div>
              <div class="sec-head gap"><i class="tri-down"></i><span>Components</span><i class="sec-x">×</i></div>
              <div class="comp-top">
                <div class="comp-thumb">
                  <svg class="thumb-ic" viewBox="0 0 44 44"><path d="M22 5l10 5v11l-10 5-10-5V10z" fill="#d8d8d8" stroke="#a4a4a4" stroke-width="2.5"/><path d="M12 22l10 5v11l-10 5L2 38V27z" fill="#c8c8c8" stroke="#a4a4a4" stroke-width="2.5"/><path d="M32 22l10 5v11l-10 5-10-5V27z" fill="#d0d0d0" stroke="#a4a4a4" stroke-width="2.5"/><path d="M12 10l10 5 10-5M2 27l10 5 10-5 10 5 10-5" fill="none" stroke="#a4a4a4" stroke-width="1.5"/></svg>
                </div>
                <div class="fields">
                  <div class="field name"></div>
                  <div class="field desc"></div>
                </div>
                <div class="comp-ops"><i class="op-down"></i><i class="op-plus">+</i></div>
              </div>
              <div class="tabs">
                <span class="tab active">Select</span><span class="tab edit">Edit</span><span class="tab stats">Statistics</span>
              </div>
              <div class="searchbar">
                <span class="sb-btn view"><svg viewBox="0 0 22 14"><path d="M2 2h5v4H2zM2 9h5v4H2z" fill="none" stroke="#333"/><path d="M9 3h4M9 5h3M9 10h4M9 12h3" stroke="#333"/><path d="M16 6h5l-2.500 3z" fill="#333"/></svg></span>
                <span class="sb-btn home"><svg viewBox="0 0 20 20"><path d="M10 2L1 10h3v8h4v-5h4v5h4v-8h3z" fill="#fff" stroke="#111" stroke-width="1.500"/></svg></span>
                <span class="sb-btn homedrop"><i class="caret big"></i></span>
                <div class="search"><span>3D Warehouse</span><span class="search-go"><svg viewBox="0 0 14 14"><circle cx="8" cy="6" r="3.500" fill="none" stroke="#222" stroke-width="1.200"/><path d="M5 9l-3 3" stroke="#222" stroke-width="1.500"/></svg></span></div>
                <span class="sb-btn nav"><svg viewBox="0 0 16 16"><path d="M3 4h5V1l7 7-7 7v-3H3z" fill="#222"/><path d="M4 6h4v1H4zM4 9h4v1H4z" fill="#fff"/></svg></span>
              </div>
              <div class="comp-list"></div>
            </div>
            <div class="scrollbar"><i class="sb-up"></i><div class="sb-thumb"><i></i></div></div>
          </div>
        </aside>
      </main>

      <footer class="statusbar">
        <svg class="st-ic" viewBox="0 0 20 20"><circle cx="10" cy="10" r="9" fill="#f4f4f4" stroke="#bbb" stroke-width="1.500"/><path d="M10 16c-2-4-4-6-4-8a4 4 0 018 0c0 2-2 4-4 8z" fill="#b0b0b0"/><circle cx="10" cy="8" r="1.500" fill="#f4f4f4"/></svg>
        <svg class="st-ic" viewBox="0 0 20 20"><circle cx="10" cy="10" r="8.500" fill="#fff" stroke="#111" stroke-width="1.800"/><circle cx="10" cy="5.500" r="1.800" fill="#111"/><path d="M8 8.500h4v7H8z" fill="#111"/></svg>
        <i class="st-sep"></i>
        <span class="st-text">Click or drag to select objects. Shift = Add/Subtract. Ctrl = Add. Shift + Ctrl = Subtract.</span>
        <i class="st-sep right"></i>
        <span class="st-label">Measurements</span>
        <div class="st-box"></div>
      </footer>

      <div class="taskbar">
        <div class="task-start"><i class="tgrip"></i></div>
        <div class="task-apps">
          <span class="app-btn on"><svg><use href="#t-folder"/></svg></span>
          <span class="app-btn"><svg><use href="#t-notes"/></svg></span>
          <span class="app-btn"><svg><use href="#t-mon"/></svg></span>
          <span class="app-btn"><svg><use href="#t-code"/></svg></span>
          <span class="app-btn"><svg><use href="#t-npp"/></svg></span>
          <span class="app-btn"><svg><use href="#t-gray"/></svg></span>
          <span class="app-btn on white"><svg><use href="#t-su"/></svg></span>
          <span class="app-btn"><svg><use href="#t-opera"/></svg></span>
          <span class="app-btn"><svg><use href="#t-term"/></svg></span>
          <span class="app-btn"><svg><use href="#t-sql"/></svg></span>
          <div class="app-scroll"><i class="up"></i><i class="down"></i></div>
        </div>
        <div class="task-rest">
          <i class="tgrip"></i>
          <span class="task-label addr-label">Address</span>
          <div class="addr"><i class="caret"></i><span class="addr-go"><svg viewBox="0 0 20 20"><path d="M3 10l5-6 1 5h2l-3 6z" fill="#1a6dc8"/><path d="M17 10l-5 6-1-5H9l3-6z" fill="#1a6dc8"/></svg></span></div>
          <i class="tgrip links"></i>
          <span class="task-label">Links</span>
          <span class="chev links">»</span>
          <i class="tgrip"></i>
          <svg class="tray-ic note"><use href="#t-note"/></svg>
          <i class="tgrip"></i>
          <span class="task-label desk-label">Desktop</span>
          <span class="chev">»</span>
          <div class="tray-icons">
            <svg class="tray-ic"><use href="#t-printc"/></svg><svg class="tray-ic"><use href="#t-printc"/></svg><svg class="tray-ic"><use href="#t-vee"/></svg><svg class="tray-ic"><use href="#t-onenote"/></svg><svg class="tray-ic"><use href="#t-win"/></svg><svg class="tray-ic"><use href="#t-teams"/></svg><svg class="tray-ic"><use href="#t-bt"/></svg><svg class="tray-ic"><use href="#t-flag"/></svg><svg class="tray-ic"><use href="#t-power"/></svg><svg class="tray-ic"><use href="#t-signal"/></svg><svg class="tray-ic"><use href="#t-sound"/></svg>
          </div>
          <span class="clock">3:33 AM</span>
          <i class="show-desk"></i>
        </div>
      </div>

      <!-- floats over the toolbars -->
      <div class="floatwin">
        <div class="float-head"><b>...</b><span>×</span></div>
        <svg class="float-ic" viewBox="0 0 28 26"><path d="M2 9l10-3 14-4 1 20-5 3H5z" fill="#fff" stroke="#7ab82a" stroke-width="2"/><path d="M14 24c0-8 1-13 5-13s4 6 4 13z" fill="#7ab82a"/><path d="M3 11l8-2-2 4zM10 10l4-1-2 5-4 1z" fill="#7ab82a"/><path d="M12 4h13v4H12z" fill="#8cc63f"/></svg>
      </div>
      <svg class="orb" viewBox="2 1 38 35">
        <defs>
          <radialGradient id="orbfill" cx="50%" cy="40%" r="60%"><stop offset="0" stop-color="#5bb6ea"/><stop offset="1" stop-color="#0d4a86"/></radialGradient>
        </defs>
        <circle cx="21" cy="20" r="19" fill="url(#orbfill)" stroke="#2d5c86"/>
        <path d="M10 12c3-2 6-1 10 1l-2 6c-3-2-7-2-10-1z" fill="#e8472a"/>
        <path d="M22 13c3 2 7 2 10 0l-2 7c-3 1-7 1-10-1z" fill="#8bc53f"/>
        <path d="M8 20c3-1 6-1 9 1l-2 6c-3-2-6-2-9-1z" fill="#2f9fe0"/>
        <path d="M19 21c3 2 7 2 10 0l-2 7c-3 1-7 1-10-1z" fill="#f6c01e"/>
      </svg>
    </div>
  </body>
</html>
```

FILE: styles.css
```css
* { box-sizing: border-box; }
html, body { margin: 0; padding: 0; }
body { width: 1366px; height: 768px; overflow: hidden; font-family: "Noto Sans", "Liberation Sans", sans-serif; font-size: 12px; color: #111; background: #f0f0f0; }
i { font-style: normal; display: block; }
svg { display: block; }
.defs { position: absolute; width: 0; height: 0; }
.app { position: relative; width: 1366px; height: 768px; display: flex; flex-direction: column; }

/* title and menu */
.titlebar { height: 22px; flex: none; display: flex; align-items: center; padding-bottom: 2px; border-top: 1px solid #3c3c3c; background: linear-gradient(#9cb8d6, #b6cfe9); }
.title-logo { width: 18px; height: 18px; margin: 0 5px 0 3px; }
.title-text { font-size: 11.5px; color: #0c1420; }
.win-btns { margin-left: auto; margin-right: 3px; display: flex; gap: 2px; margin-top: 2px; }
.win-btn { width: 31px; height: 17px; border: 1px solid #5f7286; border-radius: 2px; background: linear-gradient(#d6e4f2 45%, #8fabc8 50%, #b9cde2); display: flex; align-items: center; justify-content: center; position: relative; }
.win-min { width: 10px; height: 4px; margin-top: 4px; background: #fff; border: 1px solid #45586c; }
.win-max { width: 8px; height: 7px; border: 1px solid #333; background: #dde8f2; position: absolute; left: 10px; top: 6px; }
.win-max.back { left: 13px; top: 3px; background: #c4d4e4; }
.win-close { background: linear-gradient(#e09a88 40%, #b8391f 50%, #c4503a); border-color: #5a2a2a; color: #fff; font-size: 12px; font-weight: bold; line-height: 1; }
.menubar { height: 21px; flex: none; display: flex; align-items: center; padding: 2px 0 0 8px; gap: 14px; background: linear-gradient(#fff 0, #fff 5px, #d8e0f0 7px, #e4e9f5); border-bottom: 1px solid #aeb4c4; font-size: 12px; color: #0c1420; }

/* toolbars */
.tbrow { height: 40px; flex: none; display: flex; border-bottom: 1px solid #a8a8a8; border-top: 1px solid #fcfcfc; background: #f0f0f0; }
.panel { display: flex; align-items: center; border-right: 1px solid #a8a8a8; padding-right: 2px; height: 100%; }
.grip { width: 2px; height: 30px; margin-left: 5px; margin-right: 2px; border-left: 2px dotted #b6b6b6; }
.ic { width: 36px; height: 36px; flex: none; }
.ic.first { margin-left: 2px; }
.ic.on { background: linear-gradient(#fafafa, #dcdcdc); border: 1px solid #8e8e8e; border-radius: 3px; }
.sep { width: 6px; height: 30px; flex: none; background: linear-gradient(#a8a8a8, #a8a8a8) center / 1px 100% no-repeat; }
.drop { width: 12px; height: 36px; flex: none; display: flex; align-items: center; justify-content: center; }
.drop::after { content: ""; border-left: 4px solid transparent; border-right: 4px solid transparent; border-top: 4px solid #111; }
.selbtn { display: flex; width: 47px; height: 34px; margin-left: 1px; background: linear-gradient(#f8f8f8, #dcdcdc); border: 1px solid #8e8e8e; border-radius: 3px; align-items: center; }
.selbtn .ic { width: 34px; margin-left: -1px; height: 32px; border-right: 1px solid #8e8e8e; }
.selbtn .drop { height: 32px; }
.ic-a1 { font-family: "Liberation Serif", serif; font-size: 11px; font-weight: bold; fill: #222; text-anchor: middle; }
.ic-3d { font-family: "Liberation Serif", serif; font-size: 34px; font-weight: bold; fill: #8f8b78; stroke: #333; stroke-width: .8px; text-anchor: middle; }

/* sliders */
.slider { width: 174px; margin-left: 9px; display: flex; flex-direction: column; gap: 3px; margin-top: 2px; font-family: "Liberation Sans", sans-serif; font-size: 12px; color: #2a2a2a; }
.slider.time { margin-left: 18px; margin-right: 8px; }
.track { height: 7px; position: relative; border: 1px solid #bbb; border-radius: 2px; }
.month .track { background: linear-gradient(90deg, #fff, #ffd060 25%, #ff8a00 55%, #ff0000 85%, #ffd0d0 100%); }
.time .track { background: linear-gradient(90deg, #fff, #a8c4e4 35%, #5f78f0 66%, #3540a8 78%, #000 100%); }
.knob { position: absolute; top: -4px; width: 7px; height: 13px; background: #e4e4e4; border: 1px solid #999; border-radius: 2px; }
.month .knob { left: 141px; }
.time .knob { left: 111px; }
.months { display: grid; grid-template-columns: repeat(12, 14.5px); text-align: center; height: 14px; line-height: 14px; }
.times { display: flex; justify-content: space-between; height: 14px; line-height: 14px; }

/* combo */
.combo { width: 230px; height: 32px; margin-left: 1px; display: flex; align-items: center; justify-content: space-between; padding: 0 8px 0 3px; border: 1px solid #8e8e8e; border-radius: 3px; background: linear-gradient(#f2f2f2, #c8c8c8); font-size: 12px; }
.caret { width: 0; height: 0; border-left: 4px solid transparent; border-right: 4px solid transparent; border-top: 4px solid #111; }
.caret.big { border-left-width: 6px; border-right-width: 6px; border-top-width: 6px; }

/* workspace */
.workspace { flex: 1; min-height: 0; display: flex; }
.lefttools { width: 76px; flex: none; display: grid; grid-template-columns: 36px 36px; grid-template-rows: 10px; grid-auto-rows: auto; padding: 0 2px; align-content: start; overflow: hidden; background: #f0f0f0; }
.hgrip { grid-column: 1 / 3; height: 10px; margin-top: 3px; border-top: 2px dotted #b6b6b6; }
.hsep { grid-column: 1 / 3; height: 6px; margin: 0 3px; background: linear-gradient(#a8a8a8, #a8a8a8) center / 100% 1px no-repeat; }
.lefttools .ic.on { margin-left: 1px; width: 34px; height: 34px; margin-top: 1px; }
.viewport { width: 938px; flex: none; height: 506px; overflow: hidden; background: linear-gradient(#1b9fdc 0, #7cc8ea 117px, #bde3f3 195px, #bcbcc0 195px, #bcbcc0 100%); }
.scene { width: 938px; height: 506px; }
.sign { font-family: "Liberation Serif", serif; font-weight: bold; font-size: 70px; fill: #0c0c0c; stroke: #0c0c0c; stroke-width: 2.4px; }
.label { font-family: "Liberation Sans", sans-serif; font-size: 16px; fill: none; stroke: #444; stroke-width: .5px; }
.dim-text { font-family: "Liberation Sans", sans-serif; font-size: 12px; fill: none; stroke: #6a767c; stroke-width: .5px; }
.splitter { width: 5px; flex: none; background: #f0f0f0; border-top: 1px solid #a8a8a8; }

/* tray */
.tray { flex: 1; min-width: 0; display: flex; flex-direction: column; background: #f0f0f0; border-top: 1px solid #c0c0c0; }
.tray-head { height: 25px; flex: none; margin-top: 2px; display: flex; align-items: center; padding: 0 4px; background: linear-gradient(#9ab5d2, #b9d1ea); border-bottom: 1px solid #c8cdd4; color: #0c1420; font-size: 11px; }
.tray-head span { margin-right: auto; }
.tray-pin { width: 10px; height: 10px; margin-right: 8px; border: 1px solid #555; background: linear-gradient(#555, #555) center / 2px 100% no-repeat; }
.tray-x { width: 12px; height: 12px; border: 1px solid #8a9aaa; color: #667; font-size: 8px; line-height: 10px; text-align: center; }
.tray-body { flex: 1; min-height: 0; display: flex; margin-top: 2px; }
.tray-panels { width: 328px; flex: none; margin-left: 1px; padding-top: 1px; border: 1px solid #9a9a9a; border-bottom: none; border-right: none; display: flex; flex-direction: column; }
.sec-head { height: 20px; flex: none; width: 325px; display: flex; align-items: center; padding-left: 6px; background: linear-gradient(#b4b4b4, #e4e4e4 25%, #d2d2d2 60%, #a2a2a2); font-size: 11px; color: #0c1420; }
.sec-head.gap { margin-top: 1px; }
.sec-head span { margin-left: 5px; margin-right: auto; }
.tri-down { width: 0; height: 0; border-left: 4px solid transparent; border-right: 4px solid transparent; border-top: 7px solid #111; }
.tri-right { width: 0; height: 0; margin-left: 1px; margin-right: 1px; border-top: 4px solid transparent; border-bottom: 4px solid transparent; border-left: 7px solid #111; }
.sec-x { width: 13px; height: 13px; margin-right: 4px; border: 1px solid #777; border-radius: 2px; background: #ececec; font-size: 10px; line-height: 10px; text-align: center; color: #333; }
.entity { width: 325px; height: 197px; flex: none; background: #f4f8fd; padding: 9px 9px 0; }
.entity b { display: block; font-size: 11px; line-height: 14px; padding-bottom: 5px; border-bottom: 1px solid #999; }
.comp-top { height: 75px; width: 325px; flex: none; display: flex; padding: 1px 0 0 2px; border-bottom: 1px solid #b8b8b8; }
.comp-thumb { width: 66px; height: 71px; border: 1px solid #a8a8a8; display: flex; align-items: center; justify-content: center; }
.thumb-ic { width: 42px; height: 42px; }
.fields { width: 225px; margin-left: 4px; display: flex; flex-direction: column; gap: 2px; }
.field { border: 1px solid #c4c4c4; border-radius: 2px; }
.field.name { height: 19px; }
.field.desc { height: 50px; }
.comp-ops { margin: 3px 0 0 11px; width: 10px; }
.op-down { width: 10px; height: 7px; border-left: 5px solid #111; border-right: 5px solid #111; border-top: 5px solid #fff; background: #111; }
.op-plus { width: 10px; height: 8px; margin-top: 1px; background: #111; color: #fff; font-size: 9px; line-height: 8px; text-align: center; font-weight: bold; }
.tabs { height: 21px; flex: none; width: 325px; margin-top: 5px; padding-left: 2px; display: flex; align-items: flex-end; border-bottom: 1px solid #a0a0a0; }
.tab { height: 18px; line-height: 17px; padding-left: 5px; border: 1px solid #a0a0a0; border-bottom: none; background: linear-gradient(#fafafa 40%, #dcdcdc); font-size: 11px; }
.tab.active { width: 43px; height: 20px; line-height: 17px; margin-bottom: -1px; background: #f0f0f0; }
.tab.edit { width: 40px; }
.tab.stats { width: 52px; margin-left: 1px; }
.searchbar { height: 29px; flex: none; width: 325px; display: flex; align-items: flex-start; padding: 3px 0 0 6px; border-bottom: 1px solid #a8a8a8; }
.sb-btn { height: 20px; display: flex; align-items: center; justify-content: center; border: 1px solid #c8c8c8; }
.sb-btn.view { width: 31px; margin-right: 2px; }
.sb-btn.view svg { width: 22px; height: 14px; }
.sb-btn.home { width: 23px; }
.sb-btn.home svg { width: 17px; height: 17px; }
.sb-btn.homedrop { width: 14px; margin-right: 2px; align-items: flex-start; padding-top: 4px; }
.search { width: 224px; height: 20px; display: flex; justify-content: space-between; align-items: center; padding-left: 2px; border: 1px solid #a8a8a8; background: #fff; color: #7a7a90; font-family: "Liberation Sans", sans-serif; font-size: 11px; }
.search-go { width: 18px; height: 18px; border-left: 1px solid #333; padding: 2px; }
.sb-btn.nav { width: 20px; margin-left: 2px; border-right: none; }
.sb-btn.nav svg { width: 14px; height: 14px; }
.comp-list { flex: 1; width: 325px; background: #fff; }
.scrollbar { flex: 1; margin-left: 2px; position: relative; padding-top: 20px; }
.sb-up { position: absolute; top: 10px; left: 5px; width: 0; height: 0; border-left: 4px solid transparent; border-right: 4px solid transparent; border-bottom: 4px solid #222; }
.sb-thumb { height: 167px; width: 15px; border: 1px solid #8e8e8e; border-radius: 2px; background: linear-gradient(90deg, #e8e8e8, #c4c4c4); display: flex; align-items: center; justify-content: center; }
.sb-thumb i { width: 7px; height: 6px; border-top: 1px solid #555; border-bottom: 1px solid #555; background: linear-gradient(#555, #555) center / 100% 1px no-repeat; }

/* status */
.statusbar { height: 29px; flex: none; display: flex; align-items: center; padding: 3px 0 0 4px; background: #f0f0f0; }
.st-ic { width: 20px; height: 20px; margin-right: 4px; }
.st-sep { width: 1px; height: 22px; background: #a8a8a8; margin-left: 6px; margin-right: 7px; }
.st-text { font-size: 12.75px; margin-left: -2px; color: #0c1420; }
.st-sep.right { margin-left: auto; margin-right: 10px; }
.st-label { font-size: 12.2px; color: #0c1420; width: 93px; }
.st-box { width: 200px; height: 24px; border: 1px solid #e6e6e6; background: #f4f4f4; }

/* taskbar */
.taskbar { height: 30px; flex: none; display: flex; border-top: 1px solid #556a80; background: linear-gradient(#8aa0b8, #7b90a9); color: #dde5ee; }
.task-start { width: 57px; flex: none; display: flex; justify-content: flex-end; }
.tgrip { width: 7px; height: 26px; flex: none; margin: 2px 5px; background: radial-gradient(circle, #33424f 1px, transparent 1.3px) 0 0 / 3.5px 4px; opacity: .7; }
.task-start .tgrip { margin-right: -7px; }
.task-apps { width: 379px; flex: none; display: flex; padding-left: 17px; align-items: center; background: linear-gradient(#a8c0dc, #b0c6e0); }
.app-btn { width: 34.5px; height: 29px; flex: none; display: flex; align-items: center; justify-content: center; border-radius: 3px; }
.app-btn svg { width: 24px; height: 24px; }
.app-btn.on { background: linear-gradient(#c8d8ea, #9db4cf); border: 1px solid #d8e4f0; }
.app-btn.white { background: linear-gradient(#fff, #dfe9f4); }
.app-scroll { width: 14px; height: 29px; flex: none; margin-left: 2px; display: flex; flex-direction: column; justify-content: space-around; align-items: center; background: #8ea4be; }
.up { width: 0; border-left: 5px solid transparent; border-right: 5px solid transparent; border-bottom: 6px solid #c6d6e6; }
.down { width: 0; border-left: 5px solid transparent; border-right: 5px solid transparent; border-top: 6px solid #c6d6e6; }
.task-rest { flex: 1; min-width: 0; display: flex; align-items: center; padding-left: 3px; }
.task-label { font-size: 11.5px; white-space: nowrap; }
.addr-label { margin-left: 4px; width: 43px; }
.addr { width: 288px; height: 24px; margin-left: 4px; flex: none; display: flex; justify-content: flex-end; align-items: center; background: #fff; border: 1px solid #5f7286; }
.addr .caret { margin-right: 6px; }
.addr-go { width: 26px; height: 22px; border-left: 1px solid #999; padding: 2px 3px; }
.tgrip.links { margin-left: 8px; margin-right: 9px; }
.desk-label { margin-left: 3px; width: 43px; }
.chev { font-size: 14px; margin: -8px 6px 0 8px; width: 7px; color: #fff; }
.chev.links { margin-left: 9px; }
.tray-ic { width: 22px; height: 22px; margin-right: 2px; flex: none; }
.tray-ic.note { margin: 0 14px 0 6px; }
.tray-icons { display: flex; margin-left: 3px; }
.clock { font-size: 11.5px; margin-left: 16px; width: 57px; white-space: nowrap; }
.show-desk { width: 15px; height: 29px; background: linear-gradient(#6e8098, #586a80); border-left: 1px solid #9fb0c4; }

/* floating bits */
.floatwin { position: absolute; left: 99px; top: 68px; width: 39px; height: 61px; background: #f0f0f0; border: 1px solid #c0c0c0; }
.float-head { height: 21px; background: #9ab0c9; display: flex; justify-content: space-between; padding: 0 6px 0 5px; }
.float-head b { font-weight: bold; font-size: 12px; line-height: 22px; }
.float-head span { color: #333; font-size: 12px; line-height: 17px; }
.float-ic { width: 28px; height: 26px; margin: 6px 0 0 5px; }
.orb { position: absolute; left: 8px; top: 733px; width: 38px; height: 35px; }
```
